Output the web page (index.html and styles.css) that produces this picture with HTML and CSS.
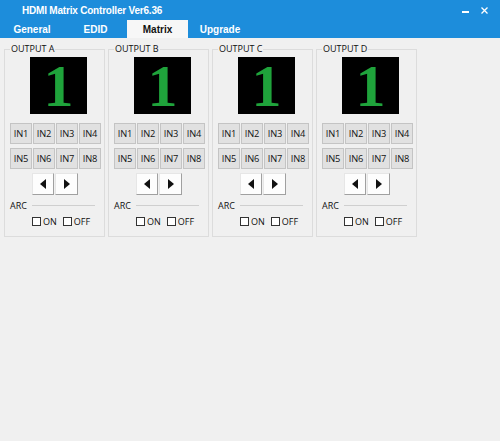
FILE: index.html
```html
<!DOCTYPE html>
<html>
<head>
<meta charset="utf-8">
<link rel="stylesheet" href="styles.css">
</head>
<body>
<div class="app">
  <header class="header">
    <div class="titlebar">
      <span class="title">HDMI Matrix Controller Ver6.36</span>
      <div class="winbtns">
        <span class="minbtn"></span>
        <svg class="closebtn" width="7" height="7" viewBox="0 0 7 7"><path d="M0.5 0.5L6.5 6.5M6.5 0.5L0.5 6.5" stroke="#fff" stroke-width="1.3"/></svg>
      </div>
    </div>
    <nav class="tabs">
      <span class="tab t1">General</span>
      <span class="tab t2">EDID</span>
      <span class="tab t3 active">Matrix</span>
      <span class="tab t4">Upgrade</span>
    </nav>
  </header>
  <main class="panels">
    <section class="panel">
      <span class="plabel">OUTPUT A</span>
      <div class="display">1</div>
      <div class="ingrid">
        <button class="inbtn">IN1</button><button class="inbtn">IN2</button><button class="inbtn">IN3</button><button class="inbtn">IN4</button>
        <button class="inbtn">IN5</button><button class="inbtn">IN6</button><button class="inbtn">IN7</button><button class="inbtn">IN8</button>
      </div>
      <div class="arrows"><button class="arrow left"><span class="tri-l"></span></button><button class="arrow right"><span class="tri-r"></span></button></div>
      <div class="arc"><span class="arclabel">ARC</span><span class="arcline"></span></div>
      <div class="checks"><label class="chk"><span class="box"></span>ON</label><label class="chk"><span class="box"></span>OFF</label></div>
    </section>
    <section class="panel">
      <span class="plabel">OUTPUT B</span>
      <div class="display">1</div>
      <div class="ingrid">
        <button class="inbtn">IN1</button><button class="inbtn">IN2</button><button class="inbtn">IN3</button><button class="inbtn">IN4</button>
        <button class="inbtn">IN5</button><button class="inbtn">IN6</button><button class="inbtn">IN7</button><button class="inbtn">IN8</button>
      </div>
      <div class="arrows"><button class="arrow left"><span class="tri-l"></span></button><button class="arrow right"><span class="tri-r"></span></button></div>
      <div class="arc"><span class="arclabel">ARC</span><span class="arcline"></span></div>
      <div class="checks"><label class="chk"><span class="box"></span>ON</label><label class="chk"><span class="box"></span>OFF</label></div>
    </section>
    <section class="panel">
      <span class="plabel">OUTPUT C</span>
      <div class="display">1</div>
      <div class="ingrid">
        <button class="inbtn">IN1</button><button class="inbtn">IN2</button><button class="inbtn">IN3</button><button class="inbtn">IN4</button>
        <button class="inbtn">IN5</button><button class="inbtn">IN6</button><button class="inbtn">IN7</button><button class="inbtn">IN8</button>
      </div>
      <div class="arrows"><button class="arrow left"><span class="tri-l"></span></button><button class="arrow right"><span class="tri-r"></span></button></div>
      <div class="arc"><span class="arclabel">ARC</span><span class="arcline"></span></div>
      <div class="checks"><label class="chk"><span class="box"></span>ON</label><label class="chk"><span class="box"></span>OFF</label></div>
    </section>
    <section class="panel">
      <span class="plabel">OUTPUT D</span>
      <div class="display">1</div>
      <div class="ingrid">
        <button class="inbtn">IN1</button><button class="inbtn">IN2</button><button class="inbtn">IN3</button><button class="inbtn">IN4</button>
        <button class="inbtn">IN5</button><button class="inbtn">IN6</button><button class="inbtn">IN7</button><button class="inbtn">IN8</button>
      </div>
      <div class="arrows"><button class="arrow left"><span class="tri-l"></span></button><button class="arrow right"><span class="tri-r"></span></button></div>
      <div class="arc"><span class="arclabel">ARC</span><span class="arcline"></span></div>
      <div class="checks"><label class="chk"><span class="box"></span>ON</label><label class="chk"><span class="box"></span>OFF</label></div>
    </section>
  </main>
</div>
</body>
</html>
```
FILE: styles.css
```css
* { box-sizing: border-box; }
html, body { margin: 0; padding: 0; }
body {
  width: 500px;
  height: 441px;
  background: #f0f0f0;
  font-family: "Open Sans", "Noto Sans", sans-serif;
  color: #111;
  overflow: hidden;
}
.app { width: 500px; height: 441px; }
.header {
  background: #1d8ddb;
  height: 38px;
  display: flex;
  flex-direction: column;
}
.titlebar {
  height: 20px;
  display: flex;
  align-items: center;
  justify-content: space-between;
  padding: 1px 12px 0 22px;
}
.title {
  color: #fff;
  font-family: "Liberation Sans", Arial, sans-serif;
  font-weight: bold;
  font-size: 10px;
  letter-spacing: -0.2px;
}
.winbtns { display: flex; align-items: center; gap: 12px; }
.minbtn { width: 7px; height: 1.5px; background: #fff; margin-top: 3px; }
.closebtn { display: block; }
.tabs {
  height: 18px;
  display: flex;
  align-items: stretch;
}
.tab {
  display: flex;
  align-items: center;
  justify-content: center;
  color: #fff;
  font-family: "Liberation Sans", Arial, sans-serif;
  font-weight: bold;
  font-size: 10px;
}
.t1 { width: 64px; }
.t2 { width: 63px; }
.t3 { width: 61px; }
.t4 { width: 64px; }
.tab.active { background: #f7f7f7; color: #111; }

.panels {
  display: flex;
  gap: 3px;
  padding: 11px 0 0 4px;
}
.panel {
  position: relative;
  width: 101px;
  height: 188px;
  border: 1px solid #dcdcdc;
  padding: 7px 4px 0 5px;
  display: flex;
  flex-direction: column;
}
.plabel {
  position: absolute;
  left: 5px;
  top: -7px;
  padding: 0 1px;
  background: #f0f0f0;
  font-size: 9px;
  line-height: 12px;
  color: #111;
}
.display {
  width: 57px;
  height: 57px;
  margin-left: 20px;
  background: #000;
  color: #1fa33b;
  font-family: "Liberation Serif", "Times New Roman", serif;
  font-weight: bold;
  font-size: 60px;
  line-height: 58px;
  text-align: center;
}
.ingrid {
  margin-top: 9px;
  display: grid;
  grid-template-columns: repeat(4, 22px);
  grid-auto-rows: 21px;
  column-gap: 1px;
  row-gap: 4px;
}
.inbtn {
  margin: 0;
  padding: 0;
  border: 1px solid #c4c4c4;
  background: #e1e1e1;
  font-family: "Open Sans", "Noto Sans", sans-serif;
  font-size: 9.3px;
  letter-spacing: -0.2px;
  color: #111;
}
.arrows {
  margin-top: 4px;
  margin-left: 22px;
  display: flex;
  gap: 1px;
}
.arrow {
  margin: 0;
  padding: 0;
  height: 22px;
  width: 22px;
  background: #fdfdfd;
  border: 1px solid #e6e6e6;
  border-right-color: #a0a0a0;
  border-bottom-color: #a0a0a0;
  display: flex;
  align-items: center;
  justify-content: center;
}
.arrow.right { width: 23px; }
.tri-l { width: 0; height: 0; border-top: 5px solid transparent; border-bottom: 5px solid transparent; border-right: 6px solid #111; }
.tri-r { width: 0; height: 0; border-top: 5px solid transparent; border-bottom: 5px solid transparent; border-left: 6px solid #111; }
.arc {
  margin-top: 4px;
  height: 12px;
  display: flex;
  align-items: center;
  gap: 4px;
}
.arclabel { font-size: 9px; width: 18px; }
.arcline { width: 63px; height: 1px; background: #cfcfcf; }
.checks {
  margin-top: 4px;
  margin-left: 22px;
  display: flex;
  gap: 6px;
  align-items: center;
}
.chk {
  display: flex;
  align-items: center;
  gap: 2px;
  font-size: 9px;
}
.box {
  width: 9px;
  height: 9px;
  border: 1px solid #333;
  background: #fff;
}
```
